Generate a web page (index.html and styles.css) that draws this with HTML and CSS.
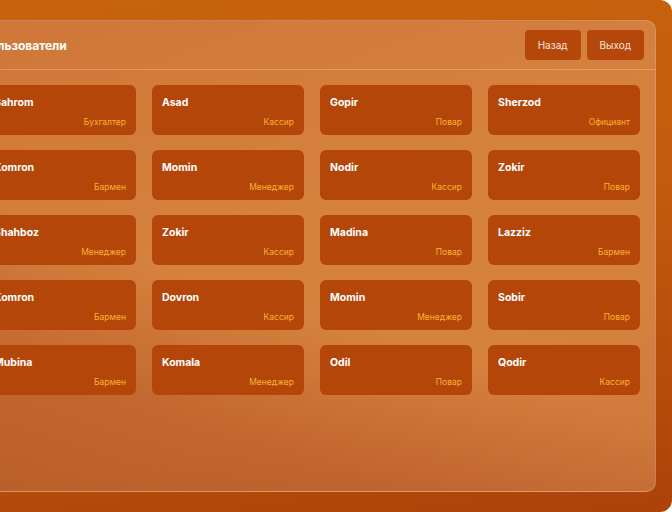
FILE: index.html
```html
<!DOCTYPE html>
<html lang="ru">
<head>
<meta charset="utf-8">
<title>Пользователи</title>
<link rel="stylesheet" href="styles.css">
</head>
<body>
<div class="frame">
  <section class="panel">
    <header class="panel-head">
      <h1 class="title">Пользователи</h1>
      <div class="actions">
        <button class="btn">Назад</button>
        <button class="btn">Выход</button>
      </div>
    </header>
    <div class="grid">
      <div class="card"><span class="name">Bahrom</span><span class="role">Бухгалтер</span></div>
      <div class="card"><span class="name">Asad</span><span class="role">Кассир</span></div>
      <div class="card"><span class="name">Gopir</span><span class="role">Повар</span></div>
      <div class="card"><span class="name">Sherzod</span><span class="role">Официант</span></div>
      <div class="card"><span class="name">Komron</span><span class="role">Бармен</span></div>
      <div class="card"><span class="name">Momin</span><span class="role">Менеджер</span></div>
      <div class="card"><span class="name">Nodir</span><span class="role">Кассир</span></div>
      <div class="card"><span class="name">Zokir</span><span class="role">Повар</span></div>
      <div class="card"><span class="name">Shahboz</span><span class="role">Менеджер</span></div>
      <div class="card"><span class="name">Zokir</span><span class="role">Кассир</span></div>
      <div class="card"><span class="name">Madina</span><span class="role">Повар</span></div>
      <div class="card"><span class="name">Lazziz</span><span class="role">Бармен</span></div>
      <div class="card"><span class="name">Komron</span><span class="role">Бармен</span></div>
      <div class="card"><span class="name">Dovron</span><span class="role">Кассир</span></div>
      <div class="card"><span class="name">Momin</span><span class="role">Менеджер</span></div>
      <div class="card"><span class="name">Sobir</span><span class="role">Повар</span></div>
      <div class="card"><span class="name">Mubina</span><span class="role">Бармен</span></div>
      <div class="card"><span class="name">Komala</span><span class="role">Менеджер</span></div>
      <div class="card"><span class="name">Odil</span><span class="role">Повар</span></div>
      <div class="card"><span class="name">Qodir</span><span class="role">Кассир</span></div>
    </div>
  </section>
</div>
</body>
</html>
```
FILE: styles.css
```css
* { box-sizing: border-box; }
html, body {
  margin: 0;
  padding: 0;
  background: #ffffff;
  overflow: hidden;
}
body {
  font-family: Inter, "Noto Sans", sans-serif;
  width: 672px;
  height: 512px;
}
.frame {
  margin-left: -48px;
  width: 720px;
  height: 512px;
  padding: 20px 16px;
  border-radius: 12px;
  background: linear-gradient(172deg, #c8630c 0%, #c35c0d 45%, #b84d0b 75%, #ad420a 100%);
}
.panel {
  height: 472px;
  border-radius: 10px;
  border: 1px solid rgba(255, 255, 255, 0.22);
  background:
    linear-gradient(18deg, rgba(165, 70, 25, 0.6) 0%, rgba(170, 70, 25, 0.45) 20%, rgba(170, 70, 25, 0) 42%),
    linear-gradient(160deg, #cf7638 0%, #d6823f 45%, #d6823f 70%, #cd773c 100%);
  display: flex;
  flex-direction: column;
}
.panel-head {
  height: 49px;
  padding: 0 11px 0 12px;
  display: flex;
  align-items: center;
  justify-content: space-between;
  border-bottom: 1px solid rgba(255, 255, 255, 0.25);
}
.title {
  margin: 0;
  font-size: 12px;
  font-weight: 700;
  color: #fff;
}
.actions {
  display: flex;
  gap: 6px;
}
.btn {
  height: 30px;
  padding: 0 13px;
  border: none;
  border-radius: 4px;
  background: #b6470a;
  color: #f6e6da;
  font-family: inherit;
  font-size: 10px;
  font-weight: 400;
}
.grid {
  padding: 15px 15px;
  display: grid;
  grid-template-columns: repeat(4, 152px);
  grid-auto-rows: 50px;
  column-gap: 16px;
  row-gap: 15px;
}
.card {
  background: #b5460a;
  border-radius: 6px;
  padding: 11px 10px 8px 10px;
  display: flex;
  flex-direction: column;
  justify-content: space-between;
}
.name {
  color: #fff;
  font-size: 10.5px;
  font-weight: 700;
}
.role {
  align-self: flex-end;
  color: #f7b430;
  font-size: 8.5px;
  font-weight: 400;
}
```
